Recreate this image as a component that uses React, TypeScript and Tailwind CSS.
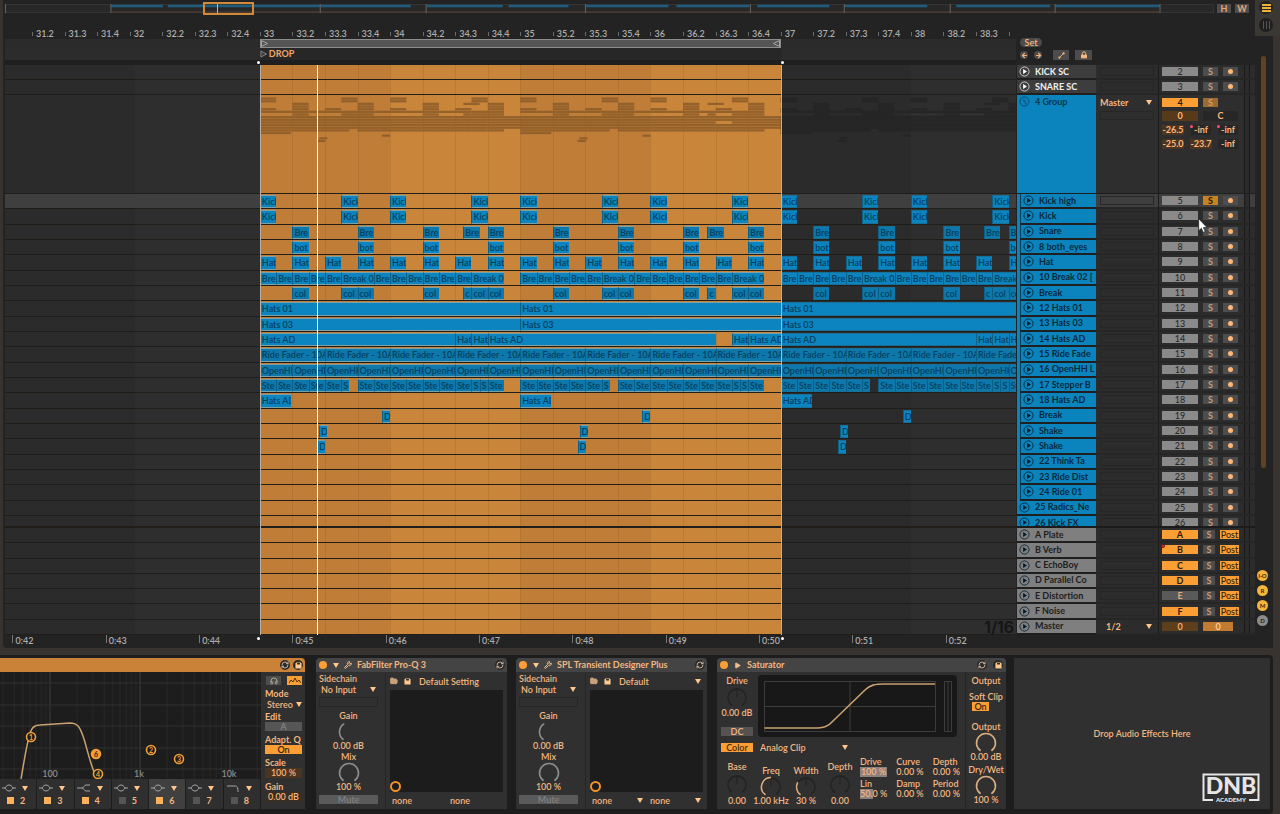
import React from "react";
import { Play, Wrench, Save, FolderOpen, RefreshCw, Lock, Headphones, ArrowLeft, ArrowRight } from "lucide-react";

/* ---------- timeline scale: beats counted from bar 33 ---------- */

const FIRST_BEAT = -7.83;
const BEATS = 31.06;
const SELECTION = 16;

const at = (beat: number) => `${((beat - FIRST_BEAT) / BEATS) * 100}%`;
const span = (beats: number) => `${(beats / BEATS) * 100}%`;

type Clip = [start: number, length: number, label: string];

const every = (step: number, length: number, label: string): Clip[] =>
  Array.from({ length: Math.ceil(24 / step) }, (_, i): Clip => [i * step, length, label]);

const phrases = (clips: Clip[]): Clip[] =>
  [0, 8, 16].flatMap((offset) => clips.map(([s, l, t]): Clip => [s + offset, l, t]));

const run = (starts: number[], length: number, label: string): Clip[] =>
  starts.map((s): Clip => [s, length, label]);

const kicks = phrases(run([0, 2.5, 4, 6.5], 0.5, "Kick"));

type Track = {
  id: string;
  name: string;
  clips?: Clip[];
  dense?: boolean;
  solo?: boolean;
  focused?: boolean;
  outside?: boolean;
};

const childTracks: Track[] = [
  { id: "5", name: "Kick high", clips: kicks, solo: true, focused: true },
  { id: "6", name: "Kick", clips: kicks },
  {
    id: "7",
    name: "Snare",
    dense: true,
    clips: [...run([1, 3, 5, 7, 9, 11, 13, 15, 17, 19, 21, 23], 0.5, "Bre"), ...run([6.25, 13.75, 22.25], 0.5, "Bre")],
  },
  { id: "8", name: "8 both_eyes", clips: phrases(run([1, 3, 5, 7], 0.5, "bot")) },
  { id: "9", name: "Hat", clips: every(1, 0.5, "Hat") },
  {
    id: "10",
    name: "10 Break 02 [",
    clips: phrases([
      ...run([0, 0.5, 1, 1.5, 2], 0.5, "Bre"),
      [2.5, 1, "Break 0"],
      ...run([3.5, 4, 4.5, 5, 5.5, 6], 0.5, "Bre"),
      [6.5, 1, "Break 0"],
    ]),
  },
  {
    id: "11",
    name: "Break",
    dense: true,
    clips: [
      ...run([1, 2.5, 3, 5, 6.5, 7, 9, 10.5, 11, 13, 14.5, 15, 17, 18.5, 19, 21, 22.5, 23], 0.5, "col"),
      ...run([6.25, 13.75, 22.25], 0.25, "c"),
    ],
  },
  { id: "12", name: "12 Hats 01", clips: every(8, 8, "Hats 01") },
  { id: "13", name: "13 Hats 03", clips: every(8, 8, "Hats 03") },
  {
    id: "14",
    name: "14 Hats AD",
    clips: [
      [0, 6, "Hats AD"], [6, 0.5, "Hat"], [6.5, 0.5, "Hat"], [7, 7, "Hats AD"],
      [14.5, 0.5, "Hat"], [15, 1, "Hats AD"], [16, 6, "Hats AD"],
      [22, 0.5, "Hat"], [22.5, 0.5, "Hat"], [23, 1, "H"],
    ],
  },
  { id: "15", name: "15 Ride Fade", clips: every(2, 2, "Ride Fader - 10A"), dense: true },
  { id: "16", name: "16 OpenHH L", clips: every(1, 1, "OpenHH"), dense: true },
  {
    id: "17",
    name: "17 Stepper B",
    dense: true,
    clips: phrases([
      ...run([0, 0.5, 1, 1.5, 2, 3, 3.5, 4, 4.5, 5, 5.5, 6, 7], 0.5, "Ste"),
      ...run([2.5, 6.5, 6.75], 0.25, "S"),
    ]),
  },
  { id: "18", name: "18 Hats AD", clips: phrases([[0, 0.95, "Hats AD"]]) },
  { id: "19", name: "Break", clips: phrases([[3.75, 0.25, "D"]]) },
  { id: "20", name: "Shake", clips: phrases([[1.82, 0.25, "D"]]) },
  { id: "21", name: "Shake", clips: phrases([[1.76, 0.25, "D"]]) },
  { id: "22", name: "22 Think Ta" },
  { id: "23", name: "23 Ride Dist" },
  { id: "24", name: "24 Ride 01" },
  { id: "25", name: "25 Radics_Ne", outside: true },
];

const returns = [
  { id: "A", name: "A Plate" },
  { id: "B", name: "B Verb", mark: true },
  { id: "C", name: "C EchoBoy" },
  { id: "D", name: "D Parallel Co" },
  { id: "E", name: "E Distortion", off: true },
  { id: "F", name: "F Noise" },
];

/* ---------- small shared parts ---------- */

function Caret({ className = "" }: { className?: string }) {
  return (
    <svg viewBox="0 0 6 5" className={`h-[5px] w-[6px] shrink-0 ${className}`} aria-hidden="true">
      <path d="M0 0h6L3 5z" fill="#ffc58a" />
    </svg>
  );
}

function Dropdown({ label, value, className = "", caret = true }: { label: string; value: string; className?: string; caret?: boolean }) {
  return (
    <div className={`relative flex h-[11px] items-center ${className}`}>
      <select
        aria-label={label}
        defaultValue={value}
        className="h-full w-full appearance-none bg-transparent pl-[2px] text-[9px] leading-[11px] text-[#f3b681] outline-none"
      >
        <option>{value}</option>
      </select>
      {caret && <Caret className="pointer-events-none absolute right-[2px]" />}
    </div>
  );
}

function PlayRing({ light = false }: { light?: boolean }) {
  return (
    <svg viewBox="0 0 12 12" className="h-[11px] w-[11px] shrink-0" aria-hidden="true">
      <circle cx="6" cy="6" r="5" fill="none" stroke={light ? "#d8d8d8" : "#08283a"} strokeWidth="1" />
      <path d="M4.5 3.3v5.4L8.7 6z" fill={light ? "#fff" : "#061c29"} />
    </svg>
  );
}

function arc(cx: number, cy: number, r: number, from: number, to: number) {
  const p = (deg: number) => {
    const a = ((deg - 90) * Math.PI) / 180;
    return `${(cx + r * Math.cos(a)).toFixed(2)} ${(cy + r * Math.sin(a)).toFixed(2)}`;
  };
  return `M${p(from)}A${r} ${r} 0 ${to - from > 180 ? 1 : 0} 1 ${p(to)}`;
}

function Knob({ from = -145, to = 145, tone = "#8c8c8c", ring = false }: { from?: number; to?: number; tone?: string; ring?: boolean }) {
  return (
    <svg viewBox="0 0 24 20" className="h-5 w-6" aria-hidden="true">
      {ring && (
        <>
          <path d={arc(12, 11, 9, -145, 145)} fill="none" stroke="#222" strokeWidth="1.3" />
          <path d="M12 2v8" stroke="#202020" />
        </>
      )}
      <path d={arc(12, 11, 9.5, from, to)} fill="none" stroke={tone} strokeWidth="1.6" />
    </svg>
  );
}

/* ---------- arrangement: left side ---------- */

function ClipBlock({ clip, dense }: { clip: Clip; dense?: boolean }) {
  const [start, length, label] = clip;
  const selected = start < SELECTION;
  return (
    <div
      className={`absolute top-px bottom-0 overflow-hidden border-l border-l-[#0a5f8a] pl-px text-[9px] leading-[12px] font-semibold whitespace-nowrap text-[#04405f] ${
        selected ? "border-y border-y-[#7fa0a3]" : "border-y border-y-[#1a6f96]"
      } ${dense ? "bg-[#0d78ab]" : "bg-[#0b84bf]"}`}
      style={{ left: at(start), width: span(length) }}
    >
      {label}
    </div>
  );
}

function Lane({ track }: { track?: Track }) {
  return (
    <div className="relative min-h-0 flex-1 overflow-hidden border-b border-b-[#211d19]">
      {track?.focused && (
        <>
          <div className="absolute inset-y-0 left-0 bg-[#3f3f3f]" style={{ width: at(0) }} />
          <div className="absolute inset-y-0 right-0 bg-[#3f3f3f]" style={{ left: at(SELECTION) }} />
        </>
      )}
      {track?.clips?.map((clip, i) => <ClipBlock key={i} clip={clip} dense={track.dense} />)}
    </div>
  );
}

function GroupPreview() {
  return (
    <svg className="h-full w-full" aria-hidden="true">
      {childTracks.map((track, row) =>
        track.clips?.map(([s, l], i) => (
          <rect
            key={`${track.id}-${i}`}
            x={at(s)}
            width={span(l)}
            y={2.5 + row * 2.65}
            height="2.2"
            fill={s < SELECTION ? "#8a5a29" : "#252525"}
            fillOpacity={0.85}
          />
        )),
      )}
    </svg>
  );
}

const beatNames = Array.from({ length: 31 }, (_, i) => i - 7).map((beat) => {
  const bar = 33 + Math.floor(beat / 4);
  const sub = ((beat % 4) + 4) % 4;
  return { beat, text: beat === 23 ? "" : sub === 0 ? `${bar}` : `${bar}.${sub + 1}` };
});

const seconds = Array.from({ length: 11 }, (_, i) => ({ beat: -7.6 + i * 2.867, text: `0:${42 + i}` }));

function BeatRuler() {
  return (
    <div className="relative h-[22px] overflow-hidden">
      {beatNames.map(({ beat, text }) => (
        <div
          key={beat}
          className="absolute bottom-0 flex h-[10px] items-start text-[9px] leading-[9px] font-semibold text-[#aeaeae]"
          style={{ left: at(beat) }}
        >
          <span className="mt-[3px] h-[4px] w-px bg-[#6a6a6a]" />
          <span className="pl-[3px]">{text}</span>
        </div>
      ))}
    </div>
  );
}

function LoopAndLocators() {
  return (
    <>
      <div className="relative h-[9px] bg-[#2b2b2b]">
        <div
          className="absolute inset-y-0 flex items-center justify-between border border-[#8c8c8c] bg-[#555555]"
          style={{ left: at(0), width: span(SELECTION) }}
        >
          <svg viewBox="0 0 7 7" className="h-[7px] w-[7px]" aria-hidden="true">
            <path d="M.5.5v6L6.5 3.5z" fill="none" stroke="#a5a5a5" />
          </svg>
          <svg viewBox="0 0 7 7" className="h-[7px] w-[7px]" aria-hidden="true">
            <path d="M6.5.5v6L.5 3.5z" fill="none" stroke="#a5a5a5" />
          </svg>
        </div>
      </div>
      <div className="relative h-[12px] bg-[#2c2c2c]">
        <div className="absolute inset-y-0 bg-[#272727]" style={{ left: at(0), width: span(SELECTION) }} />
        <div
          className="absolute inset-y-0 flex items-center gap-[2px] text-[9px] leading-[12px] font-bold text-[#f2a86c]"
          style={{ left: at(0) }}
        >
          <svg viewBox="0 0 8 8" className="h-[8px] w-[7px]" aria-hidden="true">
            <path d="M1 .5v7L7.5 4z" fill="#3c3c3c" stroke="#8d8d8d" />
          </svg>
          DROP
        </div>
      </div>
      <div className="relative h-[5px] bg-[#1f1f1f]">
        <span className="absolute bottom-px h-[3px] w-[3px] -translate-x-full rounded-full bg-white" style={{ left: at(0) }} />
        <span className="absolute bottom-px h-[3px] w-[3px] rounded-full bg-white" style={{ left: at(SELECTION) }} />
      </div>
    </>
  );
}

function Background() {
  return (
    <div className="absolute inset-0 bg-[#2e2e2e]" aria-hidden="true">
      {[-8, 0, 8, 16].map((b) => (
        <div key={b} className="absolute inset-y-0 bg-[#2b2b2b]" style={{ left: at(Math.max(b, FIRST_BEAT)), width: span(4) }} />
      ))}
      <div className="absolute inset-y-0 flex bg-[#ca863b]" style={{ left: at(0), width: span(SELECTION) }}>
        {Array.from({ length: 16 }, (_, i) => (
          <div
            key={i}
            className={`flex-1 border-l border-l-black/7 ${i % 8 < 4 ? "bg-[#c07d37]" : "bg-[#c98539]"}`}
          />
        ))}
      </div>
    </div>
  );
}

function Timeline() {
  return (
    <section className="flex min-w-0 flex-1 flex-col overflow-hidden" aria-label="Arrangement">
      <BeatRuler />
      <LoopAndLocators />
      <div className="relative">
        <Background />
        <div className="relative flex flex-col">
          <div className="flex h-[30px] flex-col">
            <Lane />
            <Lane />
          </div>
          <div className="h-[99px] border-b border-b-[#211d19]">
            <GroupPreview />
          </div>
          <div className="flex h-[322px] flex-col">
            {childTracks.map((track) => (
              <Lane key={track.id} track={track} />
            ))}
          </div>
          <div className="flex h-[12px] flex-col border-b border-b-[#211d19]">
            <Lane />
          </div>
          <div className="flex h-[107px] flex-col">
            {Array.from({ length: 7 }, (_, i) => (
              <Lane key={i} />
            ))}
          </div>
        </div>
        <div className="absolute inset-y-0 w-px bg-[#b9b0a5]" style={{ left: at(0) }} />
        <div className="absolute inset-y-0 w-px bg-[#b9b0a5]" style={{ left: at(SELECTION) }} />
        <div className="absolute inset-y-0 w-px bg-white" style={{ left: at(1.75) }} />
        <span className="absolute right-[2px] bottom-0 font-['Inter',sans-serif] text-[16px] leading-[15px] font-semibold text-[#141414]">1/16</span>
      </div>
      <div className="relative h-[13px] overflow-hidden">
        {seconds.map(({ beat, text }) => (
          <div key={text} className="absolute inset-y-0 flex text-[9px] leading-[11px] font-semibold text-[#aeaeae]" style={{ left: at(beat) }}>
            <span className="h-[8px] w-px bg-[#777]" />
            <span className="pl-[2px]">{text}</span>
          </div>
        ))}
        <span className="absolute top-[2px] h-[3px] w-[3px] -translate-x-full rounded-full bg-white" style={{ left: at(0) }} />
        <span className="absolute top-[2px] h-[3px] w-[3px] rounded-full bg-white" style={{ left: at(SELECTION) }} />
      </div>
    </section>
  );
}

/* ---------- arrangement: track headers and mixer ---------- */

function Activator({ id, on = false, mark = false }: { id: string; on?: boolean; mark?: boolean }) {
  return (
    <button
      type="button"
      aria-label={`Track ${id} on`}
      className={`relative h-[9px] w-9 shrink-0 text-center text-[9px] leading-[9px] ${on ? "bg-[#fb9f35] font-bold text-[#2b1a06]" : "bg-[#8a8a8a] font-medium text-[#2a2a2a]"}`}
    >
      {id}
      {mark && <span className="absolute -top-px -left-px h-1 w-1 rounded-full border border-[#8b0f12] bg-[#c4431f]" />}
    </button>
  );
}

function Solo({ id, on = false, narrow = false }: { id: string; on?: boolean; narrow?: boolean }) {
  return (
    <button
      type="button"
      aria-label={`Solo ${id}`}
      className={`h-[9px] shrink-0 text-center text-[9px] leading-[9px] font-bold ${narrow ? "w-3" : "w-[15px]"} ${
        on ? "bg-[#c58420] text-[#241503]" : "bg-[#4d4d4d] text-[#c89c76]"
      }`}
    >
      S
    </button>
  );
}

function Arm({ id }: { id: string }) {
  return (
    <button type="button" aria-label={`Arm ${id}`} className="flex h-[9px] w-[15px] shrink-0 items-center justify-center bg-[#4d4d4d]">
      <span className="h-[5px] w-[5px] rounded-full bg-[#ffb877]" />
    </button>
  );
}

function Meter() {
  return <span className="ml-auto h-full w-[6px] shrink-0 border-x border-x-[#1a1a1a] bg-[#2b2b2b]" />;
}

type HeaderTone = "dark" | "blue" | "grey";

const toneClass: Record<HeaderTone, string> = {
  dark: "bg-[#3d3d3d] text-[#f1f1f1]",
  blue: "bg-[#0b84bd] text-[#04293d]",
  grey: "bg-[#7f7f7f] text-[#1e1e1e]",
};

function TrackRow({
  name, tone, nested = false, focused = false, io, children,
}: {
  name: string; tone: HeaderTone; nested?: boolean; focused?: boolean; io?: React.ReactNode; children: React.ReactNode;
}) {
  return (
    <div className="flex min-h-0 flex-1 overflow-hidden">
      <div className={`flex w-[79px] shrink-0 ${nested ? "bg-[#0b84bd]" : ""}`}>
        <div
          className={`flex min-w-0 flex-1 items-center gap-[5px] overflow-hidden border-b-2 border-b-[#1f1f1f] pl-[2px] text-[9px] leading-[12px] font-bold whitespace-nowrap ${toneClass[tone]} ${
            nested ? "ml-[3px] border-l border-l-[#0a3d57]" : ""
          }`}
        >
          <PlayRing light={tone === "dark"} />
          {name}
        </div>
      </div>
      <div className={`flex w-[63px] shrink-0 items-center border-r border-b-2 border-r-[#1b1b1b] border-b-[#262626] px-[4px] ${focused ? "bg-[#3f3f3f]" : "bg-[#2c2c2c]"}`}>
        {io ?? <span className="h-[9px] w-full border border-[#262626]" />}
      </div>
      <div className={`flex flex-1 items-center border-b-2 border-b-[#262626] pr-[5px] pl-[3px] ${focused ? "bg-[#3f3f3f]" : "bg-[#2c2c2c]"}`}>
        {children}
        <Meter />
      </div>
    </div>
  );
}

function Strip({ id, solo }: { id: string; solo?: boolean }) {
  return (
    <div className="flex gap-[5px]">
      <Activator id={id} />
      <Solo id={id} on={solo} />
      <Arm id={id} />
    </div>
  );
}

function GroupRow() {
  const cells = "h-[10px] text-center text-[9px] leading-[10px] font-bold text-[#ffb67c]";
  return (
    <div className="flex h-[99px] overflow-hidden">
      <div className="flex w-[79px] shrink-0 items-start gap-[5px] border-b border-b-[#1f1f1f] bg-[#0b84bd] pt-px pl-[2px] text-[9px] leading-[12px] font-bold text-[#04374f]">
        <svg viewBox="0 0 12 12" className="h-[11px] w-[11px] shrink-0" aria-hidden="true">
          <circle cx="6" cy="6" r="5" fill="none" stroke="#0a4766" />
          <path d="M4 4.5h3M5 6.5h3M6.5 8.5h2" stroke="#0a4766" />
        </svg>
        4 Group
      </div>
      <div className="w-[63px] shrink-0 border-r border-b border-[#1b1b1b] bg-[#2e2e2e] px-[4px] pt-[2px]">
        <Dropdown label="Group output" value="Master" className="-ml-[2px] font-bold" />
        <span className="mt-[3px] block h-[9px] border border-[#272727]" />
      </div>
      <div className="flex flex-1 border-b border-b-[#1f1f1f] bg-[#2e2e2e] pr-[5px] pl-[3px]">
        <div className="flex w-[76px] flex-col gap-[4px] pt-[3px]">
          <div className="flex gap-[5px]">
            <Activator id="4" on />
            <button type="button" aria-label="Solo 4" className="h-[9px] w-[15px] bg-[#9a6c33] text-center text-[9px] leading-[9px] font-bold text-[#d99a5a]">S</button>
          </div>
          <div className="flex justify-between">
            <span className={`${cells} w-[36px] bg-[#573a1a]`}>0</span>
            <span className={`${cells} w-[35px] bg-[#272727]`}>C</span>
          </div>
          <div className="flex justify-between">
            <span className={`${cells} w-[22px] bg-[#4b3520]`}>-26.5</span>
            <span className={`${cells} relative w-[20px] bg-[#272727]`}>-inf<i className="absolute top-0 -left-px h-[3px] w-[3px] rounded-full bg-[#ff4f70]" /></span>
            <span className={`${cells} relative w-[20px] bg-[#272727]`}>-inf<i className="absolute top-0 -left-px h-[3px] w-[3px] rounded-full bg-[#ff4f70]" /></span>
          </div>
          <div className="flex justify-between">
            <span className={`${cells} w-[22px] bg-[#4b3520]`}>-25.0</span>
            <span className={`${cells} w-[22px] bg-[#4b3520]`}>-23.7</span>
            <span className={`${cells} w-[20px] bg-[#272727]`}>-inf</span>
          </div>
        </div>
        <Meter />
      </div>
    </div>
  );
}

function TrackPanel() {
  const tool = "flex h-[10px] items-center justify-center bg-[#4c4c4c] text-[#f7b478]";
  return (
    <section className="relative ml-px flex w-[238px] shrink-0 flex-col" aria-label="Tracks">
      <div className="flex h-12 flex-col gap-[3px] pt-[21px] pl-[3px]">
        <button type="button" className="h-[9px] w-[22px] rounded-full bg-[#4c4c4c] text-center text-[9px] leading-[9px] font-semibold text-[#f7b478]">Set</button>
        <div className="flex items-center">
          <button type="button" aria-label="Previous locator" className="flex h-2 w-2 items-center justify-center rounded-full bg-[#4c4c4c] text-[#f7b478]"><ArrowLeft size={7} strokeWidth={4} /></button>
          <button type="button" aria-label="Next locator" className="ml-[6px] flex h-2 w-2 items-center justify-center rounded-full bg-[#4c4c4c] text-[#f7b478]"><ArrowRight size={7} strokeWidth={4} /></button>
          <button type="button" aria-label="Automation mode" className={`${tool} ml-[11px] w-4`}>
            <svg viewBox="0 0 8 8" className="h-[7px] w-[7px]" aria-hidden="true"><path d="M1.5 6.5l5-5" stroke="currentColor" /><circle cx="1.6" cy="6.4" r="1.3" fill="currentColor" /><circle cx="6.4" cy="1.6" r="1.3" fill="currentColor" /></svg>
          </button>
          <button type="button" aria-label="Lock envelopes" className={`${tool} ml-[6px] w-[17px]`}>
            <svg viewBox="0 0 8 8" className="h-[8px] w-[8px]" aria-hidden="true"><path d="M2.3 4V2.6a1.700 1.700 0 0 1 3.400 0V4" fill="none" stroke="currentColor" /><path d="M1 3.700h6v3.600H1z" fill="currentColor" /></svg>
          </button>
        </div>
      </div>
      <div className="flex h-[30px] flex-col">
        <TrackRow name="KICK SC" tone="dark"><Strip id="2" /></TrackRow>
        <TrackRow name="SNARE SC" tone="dark"><Strip id="3" /></TrackRow>
      </div>
      <GroupRow />
      <div className="flex h-[322px] flex-col">
        {childTracks.map((t) => (
          <TrackRow key={t.id} name={t.name} tone="blue" nested={!t.outside} focused={t.focused}>
            <Strip id={t.id} solo={t.solo} />
          </TrackRow>
        ))}
      </div>
      <div className="h-[12px] overflow-hidden border-b-2 border-b-[#1b1b1b]">
        <div className="flex h-[15px] flex-col">
          <TrackRow name="26 Kick FX" tone="blue"><Strip id="26" /></TrackRow>
        </div>
      </div>
      <div className="flex h-[107px] flex-col">
        {returns.map((r) => (
          <TrackRow key={r.id} name={r.name} tone="grey">
            <div className="flex gap-[5px]">
              {r.off ? (
                <button type="button" aria-label="Track E on" className="h-[9px] w-9 bg-[#595959] text-center text-[9px] leading-[9px] font-bold text-[#e0a97b]">E</button>
              ) : (
                <Activator id={r.id} on mark={r.mark} />
              )}
              <Solo id={r.id} narrow />
              <button type="button" className="h-[9px] w-[19px] bg-[#fb9f35] text-center text-[9px] leading-[9px] font-medium text-[#3a2206]">Post</button>
            </div>
          </TrackRow>
        ))}
        <TrackRow name="Master" tone="grey" io={<Dropdown label="Master output" value="1/2" className="w-full pl-[4px] font-bold" />}>
          <span className="h-[9px] w-[36px] bg-[#5d3f1c] text-center text-[9px] leading-[9px] font-semibold text-[#ffb67c]">0</span>
          <span className="ml-[5px] h-[9px] w-[30px] bg-[#c27c31] text-center text-[9px] leading-[9px] font-semibold text-[#ffd2a3]">0</span>
        </TrackRow>
      </div>
      <svg viewBox="0 0 10 15" className="absolute top-[201px] left-[181px] h-[15px] w-[10px]" aria-hidden="true">
        <path d="M.7.7v12l2.700-2.500 1.800 4.200 2-.9-1.800-4h3.600z" fill="#fff" stroke="#222" strokeWidth=".7" />
      </svg>
    </section>
  );
}

/* ---------- top overview ---------- */

function Overview() {
  const button = "h-[9px] w-[14px] bg-[#4d4d4d] text-center text-[9px] leading-[9px] font-bold text-[#e0a878]";
  return (
    <div className="flex h-[17px] items-start pt-1 pr-[6px]">
      <div className="relative h-[9px] flex-1">
        <svg viewBox="0 0 1210 9" preserveAspectRatio="none" className="h-full w-full" aria-hidden="true">
          <rect x=".5" y=".5" width="1209" height="8" fill="#282828" stroke="#343434" />
          <path d="M106 2h52M163 2h243M422 2h76M504 2h60M581 2h83M672 2h73M753 2h72M840 2h83M952 2h94M1051 2h105" stroke="#1e5b7d" strokeWidth="2.6" />
          <path d="M106 8h1050" stroke="#5a4032" />
          <path d="M.5 0v9M106 0v9M315.500 0v9M421.500 0v9M581 0v9M746 0v9M840 0v9M946 0v9M1051 0v9M1156 0v9" stroke="#6b625a" />
        </svg>
        <div className="absolute -top-[2px] left-[16.400%] h-[13px] w-[4.200%] border-2 border-[#d18a3c]">
          <span className="absolute inset-y-0 left-[26%] w-px bg-[#d7b083]" />
        </div>
      </div>
      <button type="button" className={`${button} ml-[3px]`}>H</button>
      <button type="button" className={`${button} ml-[4px]`}>W</button>
    </div>
  );
}

function SideRail() {
  const dot = "h-[11px] w-[11px] rounded-full text-center text-[6px] leading-[11px] font-bold";
  return (
    <aside className="flex w-[25px] shrink-0 flex-col" aria-label="View controls">
      <div className="flex h-9 flex-col items-center gap-[4px] bg-[#3b3733] pr-[3px] pt-px">
        <button type="button" aria-label="Arrangement view" className="flex h-[13px] w-[14px] flex-col items-center justify-center gap-px rounded-full bg-[#242424]">
          <span className="h-[2px] w-[9px] bg-[#f0b23c]" />
          <span className="h-[2px] w-[9px] bg-[#f0b23c]" />
          <span className="h-[2px] w-[9px] bg-[#f0b23c]" />
        </button>
        <button type="button" aria-label="Session view" className="flex h-[14px] w-[14px] items-center justify-center gap-[2px] rounded-full bg-[#1f1f1f]">
          <span className="h-2 w-px bg-[#555]" />
          <span className="h-2 w-px bg-[#555]" />
          <span className="h-2 w-px bg-[#555]" />
        </button>
      </div>
      <div className="mr-[7px] flex flex-1 flex-col items-center bg-[#232323] pt-5">
        <div className="mr-[2px] h-[412px] w-[5px] rounded-full bg-[#604222]" />
        <div className="mt-[102px] mr-[3px] flex flex-col gap-[4px]">
          <button type="button" className={`${dot} bg-[#f4b53d] text-[#3a2a08]`}>I·O</button>
          <button type="button" className={`${dot} bg-[#f4b53d] text-[#3a2a08]`}>R</button>
          <button type="button" className={`${dot} bg-[#f4b53d] text-[#3a2a08]`}>M</button>
          <button type="button" className={`${dot} bg-[#8b8b8b] text-[#222]`}>D</button>
        </div>
      </div>
    </aside>
  );
}

/* ---------- devices ---------- */

function Floppy() {
  return (
    <svg viewBox="0 0 8 8" className="h-[7px] w-[7px] shrink-0" aria-hidden="true">
      <path d="M.5 1.500L1.500.5h5l1 1v6h-7z" fill="#ffc890" />
      <path d="M2.300 1h3.400v1.800H2.300z" fill="#3a2f26" />
    </svg>
  );
}

function DeviceBadge({ icon }: { icon: "swap" | "save" }) {
  return (
    <button type="button" aria-label={icon === "swap" ? "Hot-swap" : "Save preset"} className="flex h-[10px] w-[10px] items-center justify-center rounded-full bg-[#2a2a2a] text-[#c9b19b]">
      {icon === "swap" ? <RefreshCw size={8} strokeWidth={3} /> : <Floppy />}
    </button>
  );
}

const graphX = (hz: number) => 50 + Math.log10(hz / 100) * 90;
const gridHz = [10, 100, 1000, 10000].flatMap((d) => Array.from({ length: 9 }, (_, i) => d * (i + 1))).filter((hz) => graphX(hz) > 0 && graphX(hz) < 261);

function EqGraph() {
  const nodes: [string, number, number, boolean][] = [
    ["1", 31, 65, false], ["6", 96, 82, true], ["4", 98, 102, false], ["2", 151, 78, false], ["3", 179, 87, false],
  ];
  return (
    <svg viewBox="0 0 261 107" className="h-[107px] w-[261px] bg-[#1d1d1d]" fontFamily="Lato, sans-serif" aria-label="Frequency response" role="img">
      {gridHz.map((hz) => (
        <path key={hz} d={`M${graphX(hz).toFixed(1)} 0v107`} stroke={[100, 1000, 10000].includes(hz) ? "#3c3c3c" : "#292929"} />
      ))}
      <path d="M0 11h261M0 33h261M0 54h261M0 76h261M0 97h261" stroke="#303030" />
      <path d="M21 107C24 90 26 76 29 65C31 56 34 53 40 53L70 51C78 51 80 55 84 67C88 80 91 95 97 107" fill="none" stroke="#c9a070" strokeWidth="1.5" />
      {nodes.map(([n, x, y, filled]) => (
        <g key={n}>
          <circle cx={x} cy={y} r="4.500" fill={filled ? "#f59a32" : "#1d1d1d"} stroke="#f0a03a" strokeWidth="1.6" />
          <text x={x} y={y + 2.5} fontSize="7" fontWeight="700" textAnchor="middle" fill={filled ? "#3a2206" : "#f0a03a"}>{n}</text>
        </g>
      ))}
      <g fill="#8c8c8c" fontSize="9" fontWeight="600" textAnchor="middle">
        <text x="50" y="105">100</text>
        <text x="139" y="105">1k</text>
        <text x="229" y="105">10k</text>
      </g>
    </svg>
  );
}

const bands = [
  { n: 2, on: true, shape: "bell" }, { n: 3, on: true, shape: "bell" }, { n: 4, on: true, shape: "shelf" },
  { n: 5, on: false, shape: "bell" }, { n: 6, on: true, shape: "bell" }, { n: 7, on: false, shape: "bell" }, { n: 8, on: false, shape: "cut" },
];

const shapePath: Record<string, string> = {
  bell: "M0 4h3M11 4h3M3 4c2-4 6-4 8 0c-2 4-6 4-8 0",
  shelf: "M0 4h5c2 0 2-3 4-3h4M5 4c2 0 2 3 4 3h4",
  cut: "M1 2h8c2 0 3 1 3 6",
};

function EqEight() {
  const label = "text-[9px] leading-[11px] font-bold text-[#f3b681]";
  const value = "h-[10px] text-center text-[9px] leading-[10px] font-semibold text-[#f3b681]";
  return (
    <article className="flex w-[305px] shrink-0 flex-col overflow-hidden rounded-tr bg-[#303030]" aria-label="EQ Eight">
      <header className="flex h-[14px] items-center justify-end gap-[3px] bg-[#c98238] pr-[2px]">
        <DeviceBadge icon="swap" />
        <DeviceBadge icon="save" />
      </header>
      <div className="flex flex-1">
        <div className="flex w-[261px] flex-col">
          <EqGraph />
          <div className="flex flex-1">
            {bands.map((b) => (
              <div key={b.n} className={`flex flex-1 flex-col justify-center gap-[3px] border-r border-r-[#1e1e1e] pl-[2px] ${b.n === 6 ? "bg-[#404040]" : "bg-[#2f2f2f]"}`}>
                <button type="button" aria-label={`Band ${b.n} filter type`} className="flex h-[9px] items-center gap-[6px]">
                  <svg viewBox="0 0 14 8" className="h-2 w-[14px]" aria-hidden="true"><path d={shapePath[b.shape]} fill="none" stroke="#a5a5a5" /></svg>
                  <Caret />
                </button>
                <label className="flex h-[9px] items-center gap-[6px] pl-[5px] text-[9px] leading-[9px] font-bold text-[#f3b681]">
                  <input type="checkbox" defaultChecked={b.on} className="h-[7px] w-[7px] appearance-none bg-[#555] checked:bg-[#ffb25e]" />
                  {b.n}
                </label>
              </div>
            ))}
          </div>
        </div>
        <div className="flex flex-1 flex-col gap-px pt-[4px] pr-[3px] pl-[4px]">
          <div className="flex h-[11px] justify-between">
            <button type="button" aria-label="Audition" className="ml-px flex h-[9px] w-[15px] items-center justify-center bg-[#4d4d4d] text-[#b0a396]"><Headphones size={8} strokeWidth={3} /></button>
            <button type="button" aria-label="Analyze" className="flex h-[9px] w-[15px] items-center justify-center bg-[#fb9f35]">
              <svg viewBox="0 0 12 7" className="h-[7px] w-3" aria-hidden="true"><path d="M0 6l2-3 2 2 2-4 2 4 2-2 2 3" fill="none" stroke="#4c2d0a" /></svg>
            </button>
          </div>
          <div>
            <div className={label}>Mode</div>
            <Dropdown label="Mode" value="Stereo" className="-mr-[2px] font-semibold" />
          </div>
          <div>
            <div className={label}>Edit</div>
            <button type="button" className="block h-[9px] w-full bg-[#565656] text-center text-[9px] leading-[9px] text-[#8d8d8d]">A</button>
          </div>
          <div className="pt-[2px]">
            <div className={`${label} whitespace-nowrap`}>Adapt. Q</div>
            <button type="button" className="block h-[9px] w-full bg-[#fb9f35] text-center text-[9px] leading-[9px] font-semibold text-[#3a2206]">On</button>
          </div>
          <div className="pt-[2px]">
            <div className={label}>Scale</div>
            <div className={`${value} bg-[#4b3520]`}>100 %</div>
          </div>
          <div className="pt-[2px]">
            <div className={label}>Gain</div>
            <div className={`${value} bg-[#3a2d22]`}>0.00 dB</div>
          </div>
        </div>
      </div>
    </article>
  );
}

function PluginDevice({ title, preset, full, className }: { title: string; preset: string; full: boolean; className: string }) {
  const text = "text-center text-[9px] leading-[10px] font-semibold text-[#f3b681]";
  return (
    <article className={`flex w-[191px] shrink-0 flex-col overflow-hidden rounded-t bg-[#303030] ${className}`} aria-label={title}>
      <header className="flex h-[14px] items-center gap-[5px] bg-[#444] pr-[2px] pl-[3px]">
        <button type="button" aria-label={`${title} on`} className="h-2 w-2 rounded-full bg-[#fb9f35]" />
        <Caret className="ml-px" />
        <Wrench size={8} strokeWidth={3} className="text-[#f0bd8c]" aria-hidden="true" />
        <h2 className="flex-1 text-[9px] leading-[12px] font-bold whitespace-nowrap text-[#f3b681]">{title}</h2>
        <DeviceBadge icon="swap" />
      </header>
      <div className="flex flex-1">
        <div className="flex w-[70px] flex-col border-r border-r-[#262626] pt-[2px] pr-[7px] pl-[3px]">
          <span className="text-[9px] leading-[10px] font-semibold text-[#f3b681]">Sidechain</span>
          <Dropdown label={`${title} sidechain`} value="No Input" className="font-semibold" />
          <span className="mt-[2px] h-[10px] border border-[#272727]" />
          <span className={`${text} mt-1`}>Gain</span>
          <div className="flex h-5 justify-center"><Knob from={-145} to={-30} /></div>
          <span className={text}>0.00 dB</span>
          <span className={`${text} mt-px`}>Mix</span>
          <div className="flex h-5 justify-center"><Knob /></div>
          <span className={text}>100 %</span>
          <button type="button" className="mt-[3px] h-[9px] bg-[#5a5a5a] text-center text-[9px] leading-[9px] font-semibold text-[#828282]">Mute</button>
        </div>
        <div className="flex flex-1 flex-col gap-[3px] pt-[3px] pr-[4px] pb-[3px] pl-[4px]">
          <div className="flex h-3 items-center gap-[6px] text-[#c9a27c]">
            <FolderOpen size={8} strokeWidth={3} fill="currentColor" aria-hidden="true" />
            <Floppy />
            <Dropdown label={`${title} preset`} value={preset} className="flex-1 font-semibold" caret={full} />
          </div>
          <div className="flex flex-1 items-end bg-[#1c1c1c]">
            <span className="h-[11px] w-[11px] rounded-full border-2 border-[#f0922f] bg-[#1c1c1c]" />
          </div>
          <div className="flex gap-[3px]">
            <Dropdown label={`${title} X axis`} value="none" className="flex-1 font-semibold" caret={full} />
            <Dropdown label={`${title} Y axis`} value="none" className="flex-1 font-semibold" caret={full} />
          </div>
        </div>
      </div>
    </article>
  );
}

function KnobCell({ label, value, className = "", ...knob }: { label: string; value: string; className?: string; from?: number; to?: number; tone?: string; ring?: boolean }) {
  return (
    <div className={`flex flex-col items-center justify-end text-[9px] leading-[10px] font-semibold whitespace-nowrap text-[#f3b681] ${className}`}>
      <span>{label}</span>
      <Knob {...knob} />
      <span>{value}</span>
    </div>
  );
}

function Saturator() {
  const text = "text-[9px] leading-[10px] font-semibold text-[#f3b681]";
  const params = [
    ["Drive", "100 %", "bg-[#8d817c]"], ["Curve", "0.00 %", ""], ["Depth", "0.00 %", ""],
    ["Lin", "50.0 %", "bg-linear-to-r from-[#8d817c] from-50% to-transparent to-50%"], ["Damp", "0.00 %", ""], ["Period", "0.00 %", ""],
  ];
  return (
    <article className="ml-[10px] flex w-[289px] shrink-0 flex-col overflow-hidden rounded-t bg-[#303030]" aria-label="Saturator">
      <header className="flex h-[14px] items-center gap-[6px] bg-[#444] pr-[3px] pl-[3px]">
        <button type="button" aria-label="Saturator on" className="h-2 w-2 rounded-full bg-[#fb9f35]" />
        <Play size={7} fill="#f0bd8c" className="text-[#f0bd8c]" aria-hidden="true" />
        <h2 className="flex-1 text-[9px] leading-[12px] font-bold text-[#f3b681]">Saturator</h2>
        <DeviceBadge icon="swap" />
        <DeviceBadge icon="save" />
      </header>
      <div className="flex flex-1">
        <div className="flex w-[246px] flex-col pl-[4px]">
          <div className="flex h-[66px] pt-[3px]">
            <div className="flex w-8 flex-col">
              <KnobCell label="Drive" value="0.00 dB" tone="none" ring className="gap-px pt-px" />
              <button type="button" className="mt-[9px] h-[9px] bg-[#575252] text-center text-[9px] leading-[9px] font-semibold text-[#f3b681]">DC</button>
            </div>
            <svg viewBox="0 0 199 62" className="ml-[5px] h-[62px] w-[199px] rounded bg-[#181818]" role="img" aria-label="Waveshaper curve">
              <path d="M6.5 6.5h171v50h-171zM92 6.5v50M6.5 31.5h171M186.5 6.5h7v50h-7zM190 6.5v50" fill="none" stroke="#3d3d3d" />
              <path d="M6.5 53H56C65 53 70 52 75 46L107 15C112 10 117 9 126 9H177" fill="none" stroke="#c9a070" strokeWidth="1.6" />
            </svg>
          </div>
          <div className="flex h-[18px] items-center">
            <button type="button" className="h-[9px] w-8 bg-[#fb9f35] text-center text-[9px] leading-[9px] font-semibold text-[#4a2c0a]">Color</button>
            <Dropdown label="Curve type" value="Analog Clip" className="ml-[5px] w-[92px] font-semibold" />
          </div>
          <div className="flex flex-1 pb-[3px]">
            <div className="flex w-[138px] shrink-0 items-end">
              <KnobCell label="Base" value="0.00" tone="none" ring className="w-8 gap-[2px]" />
              <KnobCell label="Freq" value="1.00 kHz" tone="#d9ad80" from={-145} to={0} ring className="w-9" />
              <KnobCell label="Width" value="30 %" tone="#d9ad80" from={-145} to={-60} ring className="w-[34px]" />
              <KnobCell label="Depth" value="0.00" tone="none" ring className="w-[34px] gap-[2px]" />
            </div>
            <div className="grid flex-1 grid-cols-3 content-start gap-x-[6px] gap-y-[2px] pt-px pl-px">
              {params.map(([name, val, bg]) => (
                <div key={name + val} className={`${text} whitespace-nowrap`}>
                  <div>{name}</div>
                  <div className={`w-[27px] text-center ${bg}`}>{val}</div>
                </div>
              ))}
            </div>
          </div>
        </div>
        <div className="ml-[2px] flex flex-1 flex-col items-center border-l border-l-[#262626] pt-[4px]">
          <span className={`${text} font-bold`}>Output</span>
          <span className={`${text} mt-[6px] whitespace-nowrap`}>Soft Clip</span>
          <button type="button" className="ml-[6px] h-[9px] w-[17px] self-start bg-[#fb9f35] text-center text-[9px] leading-[9px] font-semibold text-[#3a2206]">On</button>
          <KnobCell label="Output" value="0.00 dB" tone="#d9ad80" className="mt-[11px]" />
          <KnobCell label="Dry/Wet" value="100 %" tone="#d9ad80" className="mt-[3px]" />
        </div>
      </div>
    </article>
  );
}

function Logo() {
  return (
    <svg viewBox="0 0 58 30" className="h-[30px] w-[58px]" role="img" aria-label="DNB Academy">
      <path d="M11 27H1.5V1.500h55V27H47" fill="none" stroke="#e6e6e6" strokeWidth="2" />
      <text x="29" y="20.500" textAnchor="middle" fontFamily="Lato, sans-serif" fontSize="23" fontWeight="900" fill="#e6e6e6">DNB</text>
      <text x="29" y="29" textAnchor="middle" fontFamily="Lato, sans-serif" fontSize="6" fontWeight="900" fill="#e6e6e6">ACADEMY</text>
    </svg>
  );
}

export default function App() {
  return (
    <div className="flex min-h-screen flex-col bg-[#38332f] font-['Lato',sans-serif] select-none">
      <div className="ml-[3px] flex">
        <main className="flex min-w-0 flex-1 flex-col rounded-bl bg-[#232323] pl-[2px]">
          <Overview />
          <div className="flex">
            <Timeline />
            <TrackPanel />
          </div>
        </main>
        <SideRail />
      </div>
      <section className="mt-[7px] mr-[7px] flex flex-1 overflow-hidden rounded-r bg-[#1d1d1d] pt-[3px] pb-[5px]" aria-label="Devices">
        <EqEight />
        <PluginDevice title="FabFilter Pro-Q 3" preset="Default Setting" full={false} className="ml-[11px]" />
        <PluginDevice title="SPL Transient Designer Plus" preset="Default" full className="ml-[9px]" />
        <Saturator />
        <div className="relative mr-[3px] ml-2 flex flex-1 items-center justify-center bg-[#303030]">
          <p className="text-[9px] leading-[12px] font-semibold text-[#f3b681]">Drop Audio Effects Here</p>
          <div className="absolute right-[10px] bottom-[6px]"><Logo /></div>
        </div>
      </section>
    </div>
  );
}
